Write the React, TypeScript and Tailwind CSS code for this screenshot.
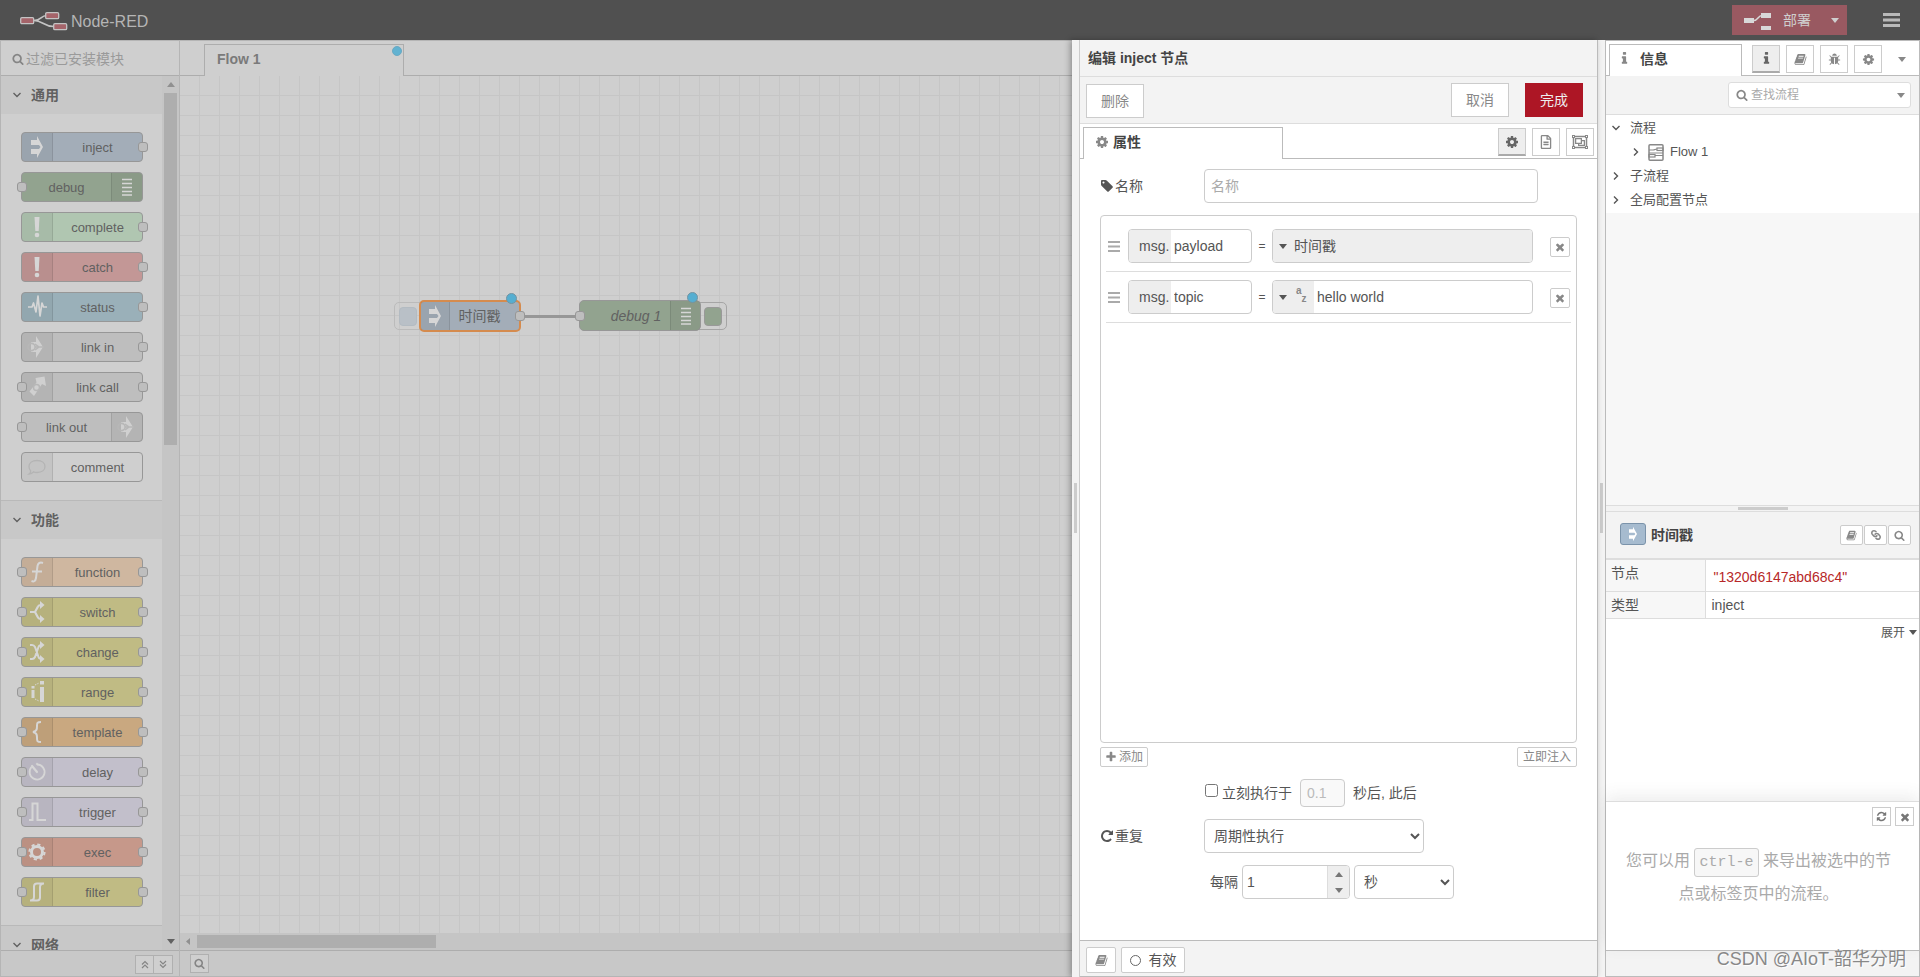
import type { ReactNode } from "react";
import clsx from "clsx";
import { FaRegFileAlt, FaRegObjectGroup, FaLink } from "react-icons/fa";

const ICONS = {
  cog: "M1152 896q0-106-75-181t-181-75-181 75-75 181 75 181 181 75 181-75 75-181zm512-109v222q0 12-8 23t-20 13l-185 28q-19 54-39 91 35 50 107 138 10 12 10 25t-9 23q-27 37-99 108t-94 71q-12 0-26-9l-138-108q-44 23-91 38-16 136-29 186-7 28-36 28h-222q-14 0-24.5-8.5t-11.5-21.5l-28-184q-49-16-90-37l-141 107q-10 9-25 9-14 0-25-11-126-114-165-168-7-10-7-23 0-12 8-23 15-21 51-66.500t54-70.500q-27-50-41-99l-183-27q-13-2-21-12.500t-8-23.500v-222q0-12 8-23t19-13l186-28q14-46 39-92-40-57-107-138-10-12-10-24 0-10 9-23 26-36 98.500-107.500t94.500-71.500q13 0 26 10l138 107q44-23 91-38 16-136 29-186 7-28 36-28h222q14 0 24.500 8.500t11.500 21.500l28 184q49 16 90 37l142-107q9-9 24-9 13 0 25 10 129 119 165 170 7 8 7 22 0 12-8 23-15 21-51 66.500t-54 70.500q26 50 41 98l183 28q13 2 21 12.500t8 23.500z",
  search: "M1216 832q0-185-131.500-316.500t-316.500-131.500-316.500 131.500-131.500 316.500 131.500 316.500 316.500 131.500 316.500-131.500 131.500-316.500zm512 832q0 52-38 90t-90 38q-54 0-90-38l-343-342q-179 124-399 124-143 0-273.500-55.500t-225-150-150-225-55.500-273.500 55.500-273.500 150-225 225-150 273.500-55.500 273.500 55.500 225 150 150 225 55.500 273.500q0 220-124 399l343 343q37 37 37 90z",
  times: "M1490 1322q0 40-28 68l-136 136q-28 28-68 28t-68-28l-294-294-294 294q-28 28-68 28t-68-28l-136-136q-28-28-28-68t28-68l294-294-294-294q-28-28-28-68t28-68l136-136q28-28 68-28t68 28l294 294 294-294q28-28 68-28t68 28l136 136q28 28 28 68t-28 68l-294 294 294 294q28 28 28 68z",
  tag: "M576 448q0-53-37.500-90.500t-90.500-37.500-90.500 37.500-37.500 90.500 37.500 90.500 90.500 37.500 90.500-37.500 37.500-90.500zm1067 576q0 53-37 90l-491 492q-39 37-91 37-53 0-90-37l-715-716q-38-37-64.500-101t-26.500-117v-416q0-52 38-90t90-38h416q53 0 117 26.500t102 64.500l715 714q37 39 37 91z",
  plus: "M1600 736v192q0 40-28 68t-68 28h-416v416q0 40-28 68t-68 28h-192q-40 0-68-28t-28-68v-416h-416q-40 0-68-28t-28-68v-192q0-40 28-68t68-28h416v-416q0-40 28-68t68-28h192q40 0 68 28t28 68v416h416q40 0 68 28t28 68z",
  book: "M1703 478q40 57 18 129l-275 906q-19 64-76.500 107.500t-122.500 43.500h-923q-77 0-148.500-53.500t-99.500-131.500q-24-67-2-127 0-4 3-27t4-37q1-8-3-21.500t-3-19.500q2-11 8-21t16.500-23.500 16.500-23.500q23-38 45-91.500t30-91.500q3-10 .5-30t-.5-28q3-11 17-28t17-23q21-36 42-92t25-90q1-9-2.500-32t.5-28q4-13 22-30.500t22-22.500q19-26 42.500-84.500t27.500-96.500q1-8-3-25.500t-2-26.500q2-8 9-18t18-23 17-21q8-12 16.500-30.500t15-35 16-36 19.500-32 26.500-23.500 36-11.500 47.500 5.500l-1 3q38-9 51-9h761q74 0 114 56t18 130l-274 906q-36 119-71.500 153.500t-128.500 34.500h-869q-27 0-38 15-11 16-1 43 24 70 144 70h923q29 0 56-15.500t35-41.500l300-987q7-22 5-57 38 15 59 43zm-1064 2q-4 13 2 22.500t20 9.500h608q13 0 25.500-9.500t16.500-22.500l21-64q4-13-2-22.500t-20-9.500h-608q-13 0-25.500 9.500t-16.500 22.500zm-83 256q-4 13 2 22.500t20 9.500h608q13 0 25.500-9.500t16.500-22.500l21-64q4-13-2-22.500t-20-9.500h-608q-13 0-25.500 9.500t-16.500 22.500z",
  repeat: "M1664 256v448q0 26-19 45t-45 19h-448q-42 0-59-40-17-39 14-69l138-138q-148-137-349-137-104 0-198.500 40.500t-163.500 109.500-109.500 163.500-40.500 198.500 40.500 198.500 109.500 163.500 163.500 109.500 198.500 40.500q119 0 225-52t179-147q7-10 23-12 15 0 25 9l137 138q9 8 9.500 20.500t-7.500 22.500q-109 132-264 204.500t-327 72.500q-156 0-298-61t-245-164-164-245-61-298 61-298 164-245 245-164 298-61q147 0 284.500 55.500t244.500 156.500l130-129q29-31 70-14 39 17 39 59z",
  refresh: "M1639 1056q0 5-1 7-64 268-268 434.500t-478 166.500q-146 0-282.500-55t-243.500-157l-129 129q-19 19-45 19t-45-19-19-45v-448q0-26 19-45t45-19h448q26 0 45 19t19 45-19 45l-137 137q71 66 161 102t187 36q134 0 250-65t186-179q11-17 53-117 8-23 30-23h192q13 0 22.500 9.500t9.500 22.500zm25-800v448q0 26-19 45t-45 19h-448q-26 0-45-19t-19-45 19-45l138-138q-148-137-349-137-134 0-250 65t-186 179q-11 17-53 117-8 23-30 23h-199q-13 0-22.500-9.500t-9.500-22.500v-7q65-268 270-434.500t480-166.500q146 0 284 55.500t245 156.500l130-129q19-19 45-19t45 19 19 45z",
  bug: "M1696 960q0 26-19 45t-45 19h-224q0 171-67 290l208 209q19 19 19 45t-19 45q-18 19-45 19t-45-19l-198-197q-5 5-15 13t-42 28.500-65 36.500-82 29-97 13v-896h-128v896q-51 0-101.500-13.500t-87-33-66-39-43.500-32.500l-15-14-183 207q-20 21-48 21-24 0-43-16-19-18-20.500-44.500t15.500-46.500l202-227q-58-114-58-274h-224q-26 0-45-19t-19-45 19-45 45-19h224v-294l-173-173q-19-19-19-45t19-45 45-19 45 19l173 173h844l173-173q19-19 45-19t45 19 19 45-19 45l-173 173v294h224q26 0 45 19t19 45zm-480-576h-640q0-133 93.500-226.500t226.500-93.500 226.500 93.500 93.500 226.500z",
  info: "M1216 1344v128q0 26-19 45t-45 19h-512q-26 0-45-19t-19-45v-128q0-26 19-45t45-19h64v-384h-64q-26 0-45-19t-19-45v-128q0-26 19-45t45-19h384q26 0 45 19t19 45v576h64q26 0 45 19t19 45zm-128-1152v192q0 26-19 45t-45 19h-256q-26 0-45-19t-19-45v-192q0-26 19-45t45-19h256q26 0 45 19t19 45z",
};

type IconName = keyof typeof ICONS;

function Icon({ name, size = 14 }: { name: IconName; size?: number }) {
  return (
    <svg width={size} height={size} viewBox="0 0 1792 1792" fill="currentColor" className="shrink-0">
      <path d={ICONS[name]} />
    </svg>
  );
}

function Caret({ up = false }: { up?: boolean }) {
  return (
    <svg width="8" height="5" viewBox="0 0 8 5" fill="currentColor" className="shrink-0">
      <path d={up ? "M0 5h8L4 0z" : "M0 0h8L4 5z"} />
    </svg>
  );
}

function Angle({ open }: { open: boolean }) {
  return (
    <svg width="8" height="8" viewBox="0 0 8 8" fill="none" stroke="currentColor" strokeWidth="1.4" className="shrink-0">
      <path d={open ? "M0.500 2l3.500 3.500L7.500 2" : "M2 0.500l3.500 3.500L2 7.500"} />
    </svg>
  );
}

function DoubleAngle({ up }: { up: boolean }) {
  return (
    <svg width="8" height="9" viewBox="0 0 8 9" fill="none" stroke="currentColor" strokeWidth="1.2">
      <path d={up ? "M1 4.500l3-3 3 3M1 8l3-3 3 3" : "M1 1l3 3 3-3M1 4.500l3 3 3-3"} />
    </svg>
  );
}

function Logo() {
  return (
    <svg width="50" height="22" viewBox="0 0 50 22" fill="none" stroke="#c4c4c4" strokeWidth="1.300" className="mt-1">
      <path d="M14 9.500c8 0 6-5 13-5M14 9.500c9 0 9 6 20 6" strokeWidth="1.600" />
      <rect x="0.700" y="6.700" width="13" height="6" rx="1.200" fill="#a5646a" />
      <rect x="25.700" y="1.700" width="13" height="6" rx="1.200" fill="#a5646a" />
      <rect x="33.700" y="12.700" width="13" height="6" rx="1.200" fill="#a5646a" />
    </svg>
  );
}

// every glyph sits on a 30x30 grid, the size of a node's icon cell
const GLYPHS: Record<string, ReactNode> = {
  inject: <path d="M9 8h6V4l6 11-6 11v-4H9v-5h8l1.500-2-1.500-2H9z" fill="currentColor" />,
  debug: <path d="M10 7.500h10M10 11.500h10M10 15.500h10M10 19.500h10M10 23h10" stroke="currentColor" strokeWidth="1.500" />,
  alert: (
    <g fill="currentColor">
      <path d="M12.500 5h5l-.8 14h-3.400z" />
      <circle cx="15" cy="23" r="2.300" />
    </g>
  ),
  status: <path d="M6 15h4l1.500-4 2.500 9 2-16 2 20 2-13 1.500 4H25" stroke="currentColor" strokeWidth="1.700" strokeLinejoin="round" fill="none" />,
  link: (
    <g>
      <path d="M9 10h5V4l7 11-7 11v-6H9z" fill="#d0d0d0" />
      <circle cx="9.500" cy="15" r="3.600" stroke="#b7b7b7" strokeWidth="1.600" />
      <path d="M13 15h9M13 12l4 3-4 3" stroke="#b7b7b7" strokeWidth="1.500" />
    </g>
  ),
  linkcall: (
    <g>
      <path d="M7.500 19.500L14.500 10.500 13.500 6l9-1.500L24 14l-4-2L12 24z" fill="#d0d0d0" />
      <circle cx="14.500" cy="15.500" r="3" stroke="#b7b7b7" strokeWidth="1.500" />
    </g>
  ),
  comment: <path d="M15 8.500c5 0 8 2.500 8 6s-3 6-8 6c-1.500 0-2.500-.2-3.500-.6C10 22 8.500 22 7 22c1.500-1 2-2 1.500-3.500C7.500 17.500 7 16 7 14.500c0-3.500 3-6 8-6z" stroke="#b4b4b4" strokeWidth="1.300" fill="none" />,
  function: <path d="M21 6c-3-1-5 0-5.500 3l-1.500 12c-.5 3-2 4-4.500 3M10 14.500h10" stroke="currentColor" strokeWidth="2" fill="none" />,
  switch: (
    <g>
      <path d="M8 15h5l3-5.500c.5-1 1-1.500 3-1.500M13 15l3 5.500c.5 1 1 1.500 3 1.500" stroke="currentColor" strokeWidth="2.200" fill="none" />
      <path d="M18 4l4.500 4-4.500 4zM18 18l4.500 4-4.500 4z" fill="currentColor" />
    </g>
  ),
  change: (
    <g>
      <path d="M8 8h2c2 0 2.500 1 3 2l3.500 10c.5 1.500 1 2 3 2M8 22h2c2 0 2.500-1 3-2l3.500-10c.5-1.500 1-2 3-2" stroke="currentColor" strokeWidth="2" fill="none" />
      <path d="M18 4l4.500 4-4.500 4zM18 18l4.500 4-4.500 4z" fill="currentColor" />
    </g>
  ),
  range: (
    <g>
      <path d="M9.500 9h3v2.500h-3zM9.500 13h3v8h-3zM18 4h4v3.500h-4zM18 10h4v15h-4z" fill="currentColor" />
      <path d="M13 8l4-2M13 22l4 2" stroke="currentColor" strokeWidth="1" strokeDasharray="1.500 1" />
    </g>
  ),
  template: <path d="M19 5c-4 0-4 1-4 4s0 5-4 6c4 1 4 3 4 6s0 4 4 4" stroke="currentColor" strokeWidth="2" fill="none" />,
  delay: (
    <g stroke="currentColor" fill="none">
      <path d="M15 7.500a7.500 7.500 0 1 1-5.500 2.500" strokeWidth="1.800" />
      <path d="M10 9l5 6" strokeWidth="2.200" strokeLinecap="round" />
      <circle cx="15" cy="7" r=".8" />
    </g>
  ),
  trigger: <path d="M7 23h3.500V6.500h5V23H24" stroke="currentColor" strokeWidth="2" fill="none" />,
  exec: (
    <g stroke="currentColor" fill="none">
      <circle cx="15" cy="15" r="5.500" strokeWidth="3" />
      <circle cx="15" cy="15" r="7.600" strokeWidth="2" strokeDasharray="3.200 2.770" />
    </g>
  ),
  filter: <path d="M22 6.500h-7c-2 0-3 1-3 3V20c0 2.500-1 3.500-4 3.500h7c2 0 3-1 3-3V10c0-2.500 1-3.500 4-3.500" stroke="currentColor" strokeWidth="2" fill="none" />,
};

function Glyph({ name, size = 30 }: { name: string; size?: number }) {
  return (
    <svg width={size} height={size} viewBox="0 0 30 30" fill="none" className="shrink-0">
      {GLYPHS[name]}
    </svg>
  );
}

interface PaletteNode {
  label: string;
  glyph: string;
  color: string;
  ports: "in" | "out" | "both" | "none";
  iconRight?: boolean;
}

const COMMON: PaletteNode[] = [
  { label: "inject", glyph: "inject", color: "bg-[#a3adb8]", ports: "out" },
  { label: "debug", glyph: "debug", color: "bg-[#92a38f]", ports: "in", iconRight: true },
  { label: "complete", glyph: "alert", color: "bg-[#b0c6b1]", ports: "out" },
  { label: "catch", glyph: "alert", color: "bg-[#c39796]", ports: "out" },
  { label: "status", glyph: "status", color: "bg-[#9ab0b9]", ports: "out" },
  { label: "link in", glyph: "link", color: "bg-[#bebebe]", ports: "out" },
  { label: "link call", glyph: "linkcall", color: "bg-[#bebebe]", ports: "both" },
  { label: "link out", glyph: "link", color: "bg-[#bebebe]", ports: "in", iconRight: true },
  { label: "comment", glyph: "comment", color: "bg-[#cfcfcf]", ports: "none" },
];

const FUNCTIONS: PaletteNode[] = [
  { label: "function", glyph: "function", color: "bg-[#cfb7a0]", ports: "both" },
  { label: "switch", glyph: "switch", color: "bg-[#c0bb84]", ports: "both" },
  { label: "change", glyph: "change", color: "bg-[#c0bb84]", ports: "both" },
  { label: "range", glyph: "range", color: "bg-[#c0bb84]", ports: "both" },
  { label: "template", glyph: "template", color: "bg-[#c9a880]", ports: "both" },
  { label: "delay", glyph: "delay", color: "bg-[#c2bfcb]", ports: "both" },
  { label: "trigger", glyph: "trigger", color: "bg-[#c2bfcb]", ports: "both" },
  { label: "exec", glyph: "exec", color: "bg-[#c6988a]", ports: "both" },
  { label: "filter", glyph: "filter", color: "bg-[#c0bb84]", ports: "both" },
];

function Port({ side }: { side: "left" | "right" }) {
  return (
    <span
      className={clsx(
        "absolute top-1/2 size-[10px] -translate-y-1/2 rounded-[3px] border border-[#979797] bg-[#bebebe]",
        side === "left" ? "-left-[5px]" : "-right-[6px]",
      )}
    />
  );
}

function PaletteItem({ node }: { node: PaletteNode }) {
  return (
    <div
      className={clsx(
        "relative flex h-[30px] w-[122px] items-center rounded-[4px] border border-[#979797] text-[13px] text-[#616161]",
        node.color,
        node.iconRight && "flex-row-reverse",
      )}
    >
      <span
        className={clsx(
          "flex h-full w-[31px] items-center justify-center overflow-hidden bg-black/5 text-[#d6d6d6]",
          node.iconRight ? "rounded-r-[3px] border-l border-black/10" : "rounded-l-[3px] border-r border-black/10",
        )}
      >
        <Glyph name={node.glyph} />
      </span>
      <span className="flex-1 pt-[2px] text-center">{node.label}</span>
      {(node.ports === "in" || node.ports === "both") && <Port side="left" />}
      {(node.ports === "out" || node.ports === "both") && <Port side="right" />}
    </div>
  );
}

function Category({ title, nodes }: { title: string; nodes: PaletteNode[] }) {
  return (
    <section className="border-b border-[#b9b9b9]">
      <button className="flex h-[38px] w-full items-center gap-[10px] bg-[#c8c8c8] px-3 text-sm font-bold text-[#616161]">
        <Angle open />
        {title}
      </button>
      {nodes.length > 0 && (
        <div className="flex flex-col gap-[10px] py-[18px] pl-5">
          {nodes.map(n => <PaletteItem key={n.label} node={n} />)}
        </div>
      )}
    </section>
  );
}

function Palette() {
  return (
    <aside className="flex w-[180px] shrink-0 flex-col border border-[#b5b5b5] bg-[#cfcfcf]">
      <label className="flex h-[35px] shrink-0 items-center gap-[2px] border-b border-[#adadad] pt-px pl-[11px] text-[#858585]">
        <Icon name="search" size={12} />
        <input
          className="w-full bg-transparent text-sm outline-none placeholder:text-[#9a9a9a]"
          placeholder="过滤已安装模块"
        />
      </label>
      <div className="flex min-h-0 flex-1">
        <div className="flex-1 overflow-hidden">
          <Category title="通用" nodes={COMMON} />
          <Category title="功能" nodes={FUNCTIONS} />
          <Category title="网络" nodes={[]} />
        </div>
        <div className="flex w-[17px] flex-col items-center bg-[#c5c5c5]">
          <span className="flex h-[17px] items-center text-[#909090]"><Caret up /></span>
          <span className="h-[352px] w-[13px] bg-[#aeaeae]" />
          <span className="mt-auto flex h-[17px] items-center text-[#616161]"><Caret /></span>
        </div>
      </div>
      <div className="flex h-[26px] shrink-0 items-center justify-end border-t border-[#adadad] bg-[#c8c8c8] pt-[2px] pr-[6px] text-[#858585]">
        <button aria-label="collapse" className="flex h-[19px] w-[19px] items-center justify-center border border-[#b0b0b0] bg-[#cfcfcf]">
          <DoubleAngle up />
        </button>
        <button aria-label="expand" className="flex h-[19px] w-[19px] items-center justify-center border border-l-0 border-[#b0b0b0] bg-[#cfcfcf]">
          <DoubleAngle up={false} />
        </button>
      </div>
    </aside>
  );
}

function ChangedDot() {
  return <span className="absolute -top-[9px] size-[11px] rounded-full border border-[#7494a2] bg-[#55aed1]" />;
}

function Workspace() {
  return (
    <main className="flex min-w-0 flex-1 flex-col border-y border-[#b5b5b5] bg-[#cfcfcf]">
      <div className="flex h-[35px] shrink-0 items-end">
        <div className="h-full w-6 border-b border-[#adadad]" />
        <div className="relative flex h-8 w-[200px] items-center border-x border-t border-[#adadad] px-3 pb-1 text-sm font-bold text-[#7a7a7a]">
          Flow 1
          <span className="absolute top-[1px] right-[1px] size-[10px] rounded-full border border-[#6ba9c2] bg-[#62b2d1]" />
        </div>
        <div className="h-full flex-1 border-b border-[#adadad]" />
      </div>
      <div className="relative flex-1 overflow-hidden bg-[linear-gradient(to_left,#c6c6c6_1px,transparent_1px),linear-gradient(to_top,#c6c6c6_1px,transparent_1px)] bg-[size:20px_20px]">
        <span className="absolute top-[239px] left-[344px] h-[3px] w-[52px] bg-[#979797]" />
        <div className="absolute top-[226px] left-[214px] flex h-[28px] w-[30px] items-center rounded-[5px] border border-[#bbbbbb] pl-1">
          <span className="h-[19px] w-[18px] rounded-[4px] border border-[#b3bbc2] bg-[#b9c0c7]" />
        </div>
        <div className="absolute top-[224px] left-[239px] flex h-[32px] w-[102px] items-center rounded-[5px] border-2 border-[#d58b4e] bg-[#a3adb8] text-sm text-[#616161]">
          <span className="flex h-full w-[29px] items-center justify-center overflow-hidden border-r border-black/10 bg-black/5 text-[#d6d6d6]">
            <Glyph name="inject" />
          </span>
          <span className="flex-1 pr-[10px] text-center">时间戳</span>
          <Port side="right" />
          <span className="absolute top-0 right-[13px]"><ChangedDot /></span>
        </div>
        <div className="absolute top-[226px] left-[515px] flex h-[28px] w-[32px] items-center justify-end rounded-[5px] border border-[#a5a5a5] pr-1">
          <span className="h-[19px] w-[18px] rounded-[4px] border border-[#999999] bg-[#92a38f]" />
        </div>
        <div className="absolute top-[224px] left-[399px] flex h-[31px] w-[122px] items-center rounded-[5px] border border-[#979797] bg-[#92a38f] text-sm text-[#616161]">
          <span className="flex-1 pl-[22px] text-center italic">debug 1</span>
          <span className="flex h-full w-[30px] items-center justify-center overflow-hidden border-l border-black/10 bg-black/5 text-[#d6d6d6]">
            <Glyph name="debug" />
          </span>
          <Port side="left" />
          <span className="absolute top-0 right-[13px]"><ChangedDot /></span>
        </div>
      </div>
      <div className="flex h-[17px] shrink-0 items-center bg-[#c5c5c5] pl-[6px]">
        <svg width="4" height="7" viewBox="0 0 4 7" fill="#909090"><path d="M4 0v7L0 3.500z" /></svg>
        <span className="ml-[7px] h-[13px] w-[239px] bg-[#aeaeae]" />
      </div>
      <div className="flex h-[26px] shrink-0 items-center border-t border-[#adadad] bg-[#c8c8c8] pl-[10px] text-[#858585]">
        <button aria-label="search" className="flex h-[19px] w-[19px] items-center justify-center border border-[#b0b0b0] bg-[#cfcfcf]">
          <Icon name="search" size={11} />
        </button>
      </div>
    </main>
  );
}

function SquareButton({ label, active, children }: { label: string; active?: boolean; children: ReactNode }) {
  return (
    <button
      aria-label={label}
      className={clsx(
        "flex size-7 items-center justify-center border border-[#cccccc]",
        active ? "border-b-2 border-b-[#aaaaaa] bg-[#eeeeee] text-[#666666]" : "bg-white text-[#888888]",
      )}
    >
      {children}
    </button>
  );
}

function PropertyRow({ name, children }: { name: string; children: ReactNode }) {
  return (
    <li className="flex h-[51px] items-center border-b border-[#dddddd] pl-[2px] pr-px">
      <svg width="12" height="11" viewBox="0 0 12 11" fill="#aaaaaa" className="shrink-0">
        <path d="M0 0h12v2H0zM0 4.500h12v2H0zM0 9h12v2H0z" />
      </svg>
      <div className="ml-2 flex h-[34px] w-[124px] overflow-hidden rounded-[4px] border border-[#cccccc] bg-white">
        <button className="w-[42px] bg-[#eeeeee] pl-[10px] text-left">msg.</button>
        <input aria-label="property" className="w-0 flex-1 pl-[3px] outline-none" defaultValue={name} />
      </div>
      <span className="w-5 text-center text-xs">=</span>
      <div className="flex h-[34px] min-w-0 flex-1 overflow-hidden rounded-[4px] border border-[#cccccc] bg-white">
        {children}
      </div>
      <button aria-label="remove" className="mt-[2px] ml-[17px] flex size-5 items-center justify-center rounded-[2px] border border-[#cccccc] bg-white text-[#888888]">
        <Icon name="times" size={12} />
      </button>
    </li>
  );
}

function EditTray() {
  return (
    <section className="z-10 flex w-[526px] shrink-0 bg-[#f3f3f3] text-sm text-[#555555] shadow-[-2px_0_6px_rgba(0,0,0,0.3)]">
      <div className="flex w-2 shrink-0 items-center justify-center border-r border-[#cccccc]">
        <span className="mt-[-2px] h-[50px] w-[3px] bg-[#cccccc]" />
      </div>
      <div className="flex min-w-0 flex-1 flex-col border-r border-b border-[#bbbbbb]">
        <h2 className="flex h-[37px] shrink-0 items-center border-b border-[#dddddd] px-2 font-bold text-[#444444]">
          编辑 inject 节点
        </h2>
        <div className="flex h-[47px] shrink-0 items-center gap-4 border-b border-[#dddddd] pr-[14px] pl-[6px]">
          <button className="mt-[2px] mr-auto h-[34px] w-[58px] border border-[#cccccc] bg-white text-[#888888]">删除</button>
          <button className="h-[34px] w-[58px] border border-[#cccccc] bg-white text-[#888888]">取消</button>
          <button className="h-[34px] w-[58px] bg-[#ad1625] text-[#eeeeee]">完成</button>
        </div>
        <div className="flex h-[35px] shrink-0 items-end bg-white">
          <div className="h-full w-[3px] border-b border-[#bbbbbb]" />
          <div className="flex h-8 w-[200px] items-center gap-1 border-x border-t border-[#bbbbbb] px-[11px] pb-1 font-bold text-[#444444]">
            <span className="text-[#888888]"><Icon name="cog" /></span>
            属性
          </div>
          <div className="flex h-full flex-1 items-center justify-end gap-[6px] border-b border-[#bbbbbb] pt-[2px] pr-[3px]">
            <SquareButton label="properties" active><Icon name="cog" /></SquareButton>
            <SquareButton label="description"><FaRegFileAlt size={14} /></SquareButton>
            <SquareButton label="appearance"><FaRegObjectGroup size={16} /></SquareButton>
          </div>
        </div>

        <form className="flex min-h-0 flex-1 flex-col bg-white px-5 pt-[10px] pb-[41px]">
          <div className="flex items-center">
            <label htmlFor="node-name" className="flex w-[104px] items-center gap-px">
              <Icon name="tag" /> 名称
            </label>
            <input
              id="node-name"
              placeholder="名称"
              className="h-[34px] w-[334px] rounded-[4px] border border-[#cccccc] px-[6px] outline-none placeholder:text-[#aaaaaa]"
            />
          </div>

          <ol className="mt-3 min-h-0 flex-1 rounded-[4px] border border-[#cccccc] p-[5px]">
            <PropertyRow name="payload">
              <button className="flex flex-1 items-center gap-[7px] bg-[#eeeeee] pl-[6px]">
                <Caret /> 时间戳
              </button>
            </PropertyRow>
            <PropertyRow name="topic">
              <button aria-label="string" className="flex w-[41px] items-center gap-[9px] bg-[#eeeeee] pl-[6px]">
                <Caret />
                <span className="flex text-[10px] leading-none font-bold text-[#888888]">
                  <span className="-mt-1">a</span>
                  <span className="mt-1">z</span>
                </span>
              </button>
              <input aria-label="value" className="w-0 flex-1 pl-[3px] outline-none" defaultValue="hello world" />
            </PropertyRow>
          </ol>

          <div className="mt-1 flex justify-between text-xs text-[#888888]">
            <button type="button" className="flex h-5 items-center gap-[2px] rounded-[2px] border border-[#cccccc] px-1">
              <Icon name="plus" size={12} />添加
            </button>
            <button type="button" className="h-5 rounded-[2px] border border-[#cccccc] px-[5px]">立即注入</button>
          </div>

          <div className="mt-3 flex h-7 items-center pl-[105px]">
            <input id="once" type="checkbox" className="mb-[5px] size-[13px]" />
            <label htmlFor="once" className="ml-1">立刻执行于</label>
            <input
              aria-label="delay"
              disabled
              defaultValue="0.1"
              className="mx-2 h-7 w-[45px] rounded-[4px] border border-[#cccccc] bg-[#f9f9f9] px-[6px] text-[#bbbbbb]"
            />
            秒后, 此后
          </div>

          <div className="mt-3 flex items-center">
            <label htmlFor="repeat" className="flex w-[104px] items-center gap-px">
              <Icon name="repeat" /> 重复
            </label>
            <select id="repeat" className="h-[34px] w-[220px] rounded-[4px] border border-[#cccccc] bg-white px-[5px]">
              <option>周期性执行</option>
            </select>
          </div>

          <div className="mt-3 flex items-center gap-1 pl-[110px]">
            <label htmlFor="interval">每隔</label>
            <span className="flex h-[34px] w-[108px] overflow-hidden rounded-[4px] border border-[#cccccc]">
              <input id="interval" defaultValue="1" className="w-0 flex-1 px-1 outline-none" />
              <span className="flex w-[22px] flex-col border-l border-[#dddddd] bg-[#eeeeee] text-[#777777]">
                <button type="button" aria-label="increase" className="flex flex-1 items-center justify-center"><Caret up /></button>
                <button type="button" aria-label="decrease" className="flex flex-1 items-center justify-center"><Caret /></button>
              </span>
            </span>
            <select aria-label="units" className="h-[34px] w-[100px] rounded-[4px] border border-[#cccccc] bg-white px-[5px]">
              <option>秒</option>
            </select>
          </div>
        </form>

        <div className="flex h-9 shrink-0 items-center gap-[5px] border-t border-[#bbbbbb] px-[6px] pt-[3px]">
          <button aria-label="help" className="flex h-[26px] w-[30px] items-center justify-center rounded-[2px] border border-[#cccccc] bg-white text-[#888888]">
            <Icon name="book" size={13} />
          </button>
          <button className="flex h-[26px] w-16 items-center justify-center gap-2 rounded-[2px] border border-[#cccccc] bg-white">
            <span className="size-[11px] rounded-full border border-[#666666]" />
            有效
          </button>
        </div>
      </div>
    </section>
  );
}

function SmallButton({ name, children }: { name: string; children: ReactNode }) {
  return (
    <button aria-label={name} className="flex h-5 w-[23px] items-center justify-center rounded-[2px] border border-[#cccccc] bg-white text-[#888888]">
      {children}
    </button>
  );
}

function Sidebar() {
  return (
    <aside className="flex w-[322px] shrink-0 bg-[#f3f3f3] text-sm text-[#555555]">
      <div className="flex w-[7px] shrink-0 items-center justify-center">
        <span className="mt-[-2px] h-[50px] w-[3px] bg-[#cccccc]" />
      </div>
      <div className="flex min-w-0 flex-1 flex-col border border-[#bbbbbb]">
        <div className="flex h-[35px] shrink-0 items-end bg-white">
          <div className="h-full w-[3px] border-b border-[#bbbbbb]" />
          <div className="flex h-8 w-[133px] items-center gap-2 border-x border-t border-[#bbbbbb] px-[7px] pb-1 font-bold text-[#444444]">
            <span className="text-[#888888]"><Icon name="info" size={15} /></span>
            信息
          </div>
          <div className="flex h-full flex-1 items-center justify-end gap-[6px] border-b border-[#bbbbbb] pt-[2px] pr-[13px] text-[#888888]">
            <SquareButton label="info" active><Icon name="info" size={15} /></SquareButton>
            <SquareButton label="help"><Icon name="book" size={13} /></SquareButton>
            <SquareButton label="debug"><Icon name="bug" size={13} /></SquareButton>
            <SquareButton label="config"><Icon name="cog" size={13} /></SquareButton>
            <button aria-label="more" className="ml-[10px]"><Caret /></button>
          </div>
        </div>
        <div className="flex h-[39px] shrink-0 items-center justify-end border-b border-[#dddddd] pr-2">
          <label className="flex h-[26px] w-[183px] items-center gap-[3px] rounded-[3px] border border-[#dddddd] bg-white pr-[5px] pl-[7px] text-[#888888]">
            <Icon name="search" size={12} />
            <input placeholder="查找流程" className="w-0 flex-1 text-xs outline-none placeholder:text-[#aaaaaa]" />
            <Caret />
          </label>
        </div>
        <ul className="bg-white py-px text-[13px] leading-6">
          <li className="flex items-center gap-[10px] pl-[6px]"><Angle open />流程</li>
          <li className="flex items-center pl-[26px]">
            <Angle open={false} />
            <svg width="16" height="17" viewBox="0 0 16 17" fill="none" stroke="#888888" strokeWidth="1.200" className="ml-2 mr-[6px]">
              <rect x="1" y="0.800" width="14" height="15.400" rx="1" strokeWidth="1.500" />
              <path d="M1 6h4c2 0 2-1 4-1M7 11.500h8M1 9h14" />
              <rect x="9" y="4" width="6" height="2.500" />
              <rect x="1" y="10.500" width="6" height="2.500" />
            </svg>
            Flow 1
          </li>
          <li className="flex items-center gap-[10px] pl-[6px]"><Angle open={false} />子流程</li>
          <li className="flex items-center gap-[10px] pl-[6px]"><Angle open={false} />全局配置节点</li>
        </ul>
        <div className="flex-1 bg-[#f7f7f7]" />
        <div className="flex h-[7px] shrink-0 items-center justify-center border-y border-[#dddddd]">
          <span className="h-[3px] w-[50px] bg-[#cccccc]" />
        </div>
        <div className="flex h-12 shrink-0 items-center gap-px border-b-2 border-[#dddddd] pr-2 pl-[14px]">
          <span className="mb-[3px] flex h-[22px] w-[26px] items-center justify-center rounded-[3px] border border-[#7b93aa] bg-[#a6bbcf] text-white">
            <Glyph name="inject" size={20} />
          </span>
          <h3 className="mr-auto pl-1 font-bold text-[#444444]">时间戳</h3>
          <SmallButton name="help"><Icon name="book" size={11} /></SmallButton>
          <SmallButton name="link"><FaLink size={10} className="rotate-90" /></SmallButton>
          <SmallButton name="find"><Icon name="search" size={11} /></SmallButton>
        </div>
        <div className="h-[241px] shrink-0 bg-white">
          <table className="w-full">
            <tbody>
              <tr className="h-[31px] border-b border-[#dddddd]">
                <th className="w-[99px] border-r border-[#dddddd] bg-[#f7f7f7] pb-1 pl-[5px] text-left font-normal">节点</th>
                <td className="pt-1 pl-2 text-[#b72828]">"1320d6147abd68c4"</td>
              </tr>
              <tr className="h-[27px] border-b border-[#dddddd]">
                <th className="border-r border-[#dddddd] bg-[#f7f7f7] pl-[5px] text-left font-normal">类型</th>
                <td className="pl-[6px]">inject</td>
              </tr>
            </tbody>
          </table>
          <a href="#more" className="mt-1 flex items-center justify-end gap-1 pr-[2px] text-xs leading-5">
            展开 <Caret />
          </a>
        </div>
        <div className="h-[149px] shrink-0 border-t border-[#dddddd] bg-white p-[5px] shadow-[0_-5px_15px_rgba(80,80,80,0.1)]">
          <div className="flex justify-end gap-1 text-[#777777]">
            <button aria-label="next tip" className="flex size-[19px] items-center justify-center border border-[#cccccc]"><Icon name="refresh" size={11} /></button>
            <button aria-label="close tips" className="flex size-[19px] items-center justify-center border border-[#cccccc]"><Icon name="times" size={12} /></button>
          </div>
          <p className="pt-[19px] pr-4 pl-2 text-center text-base leading-[31px] text-[#aaaaaa]">
            您可以用 <kbd className="rounded-[3px] border border-[#cccccc] bg-[#f7f7f7] px-1 py-[5px] font-['Liberation_Mono',monospace] text-[15px]">ctrl-e</kbd> 来导出被选中的节点或标签页中的流程。
          </p>
        </div>
        <div className="h-[26px] shrink-0 border-t border-[#bbbbbb]" />
      </div>
    </aside>
  );
}

function Header() {
  return (
    <header className="flex h-10 shrink-0 items-center bg-[#505050] pr-5 pl-5 text-[#bdbdbd]">
      <Logo />
      <h1 className="ml-px pt-1 text-base text-[#b5b5b5]">Node-RED</h1>
      <button className="ml-auto flex h-[30px] w-[115px] items-center bg-[#995961] pl-3 text-sm text-[#cfcfcf]">
        <svg width="28" height="20" viewBox="0 0 28 20" fill="#d8d8d8">
          <path d="M0 8h10v5H0zM17 3h10v5H17zM17 16h10v4H17z" />
          <path d="M10 10.500c4 0 4-5 8-5" stroke="#d8d8d8" strokeWidth="1.500" fill="none" />
        </svg>
        <span className="mr-5 ml-[11px]">部署</span>
        <Caret />
      </button>
      <button aria-label="menu" className="ml-9">
        <svg width="17" height="14" viewBox="0 0 17 14" fill="#b9b9b9"><path d="M0 0h17v3H0zM0 5.500h17v3H0zM0 11h17v3H0z" /></svg>
      </button>
    </header>
  );
}

export default function App() {
  return (
    <div className="relative flex h-screen flex-col overflow-hidden bg-[#cfcfcf] font-['Liberation_Sans','Noto_Sans_CJK_SC',sans-serif]">
      <Header />
      <div className="flex min-h-0 flex-1">
        <Palette />
        <Workspace />
        <EditTray />
        <Sidebar />
      </div>
      <span className="pointer-events-none absolute right-[14px] bottom-1 z-20 text-lg leading-7 text-[#888888] [text-shadow:1px_1px_1px_white]">
        CSDN @AIoT-韶华分明
      </span>
    </div>
  );
}
